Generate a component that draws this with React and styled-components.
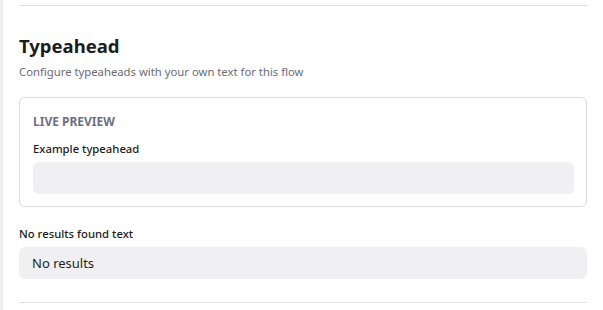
import React from 'react';
import styled, { createGlobalStyle } from 'styled-components';

const GlobalStyle = createGlobalStyle`
  html, body {
    margin: 0;
    padding: 0;
    background: #ffffff;
  }
  body {
    font-family: 'Noto Sans', 'Open Sans', Arial, sans-serif;
    color: #1f1f24;
  }
  * {
    box-sizing: border-box;
  }
`;

const Page = styled.div`
  display: flex;
  width: 603px;
  height: 310px;
  overflow: hidden;
`;

const SideStrip = styled.div`
  width: 3px;
  flex-shrink: 0;
  background: #efeff1;
`;

const Content = styled.div`
  flex: 1;
  padding: 5px 16px 0 16px;
  display: flex;
  flex-direction: column;
`;

const Divider = styled.hr`
  border: none;
  border-top: 1px solid #e1e1e3;
  margin: 0;
  margin-top: ${props => props.spaceAbove || 0}px;
`;

const Heading = styled.h2`
  margin: 27px 0 0;
  font-size: 18.5px;
  line-height: 25px;
  font-weight: 700;
  color: #1c1c21;
`;

const Subtitle = styled.p`
  margin: 6px 0 0;
  font-size: 11.3px;
  line-height: 16px;
  color: #6b6b76;
`;

const Card = styled.section`
  margin-top: 17px;
  border: 1px solid #dcdce0;
  border-radius: 6px;
  padding: 16px 12px 12px 13px;
  display: flex;
  flex-direction: column;
`;

const Eyebrow = styled.div`
  font-size: 12px;
  line-height: 16px;
  font-weight: 700;
  text-transform: uppercase;
  color: #6c6f84;
`;

const Label = styled.label`
  display: block;
  font-size: 11.3px;
  line-height: 16px;
  font-weight: 500;
  color: #1c1c21;
  margin-top: ${props => props.spaceAbove || 0}px;
`;

const Input = styled.input`
  display: block;
  width: 100%;
  height: 32px;
  margin-top: ${props => props.spaceAbove || 0}px;
  border: none;
  border-radius: 6px;
  background: #f0f0f2;
  padding: 0 13px;
  font-family: inherit;
  font-size: 13px;
  color: #1f1f24;
  outline: none;
`;

const Field = styled.div`
  margin-top: 19px;
  display: flex;
  flex-direction: column;
`;

export default function App() {
  return (
    <>
      <GlobalStyle />
      <Page>
        <SideStrip />
        <Content>
          <Divider />
          <Heading>Typeahead</Heading>
          <Subtitle>Configure typeaheads with your own text for this flow</Subtitle>
          <Card>
            <Eyebrow>Live preview</Eyebrow>
            <Label spaceAbove={11}>Example typeahead</Label>
            <Input spaceAbove={5} readOnly value="" />
          </Card>
          <Field>
            <Label>No results found text</Label>
            <Input spaceAbove={5} defaultValue="No results" />
          </Field>
          <Divider spaceAbove={23} />
        </Content>
      </Page>
    </>
  );
}
